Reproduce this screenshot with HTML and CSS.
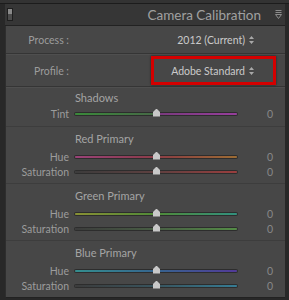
FILE: index.html
```html
<!DOCTYPE html>
<html lang="en">
<head>
  <meta charset="UTF-8">
  <meta name="viewport" content="width=device-width, initial-scale=1.0">
  <title>Camera Calibration</title>
  <link rel="stylesheet" href="styles.css">
</head>
<body>
  <div class="topbar"></div>
  <div class="panel">
    <div class="panel-head">
      <span class="switch"></span>
      <span class="title">Camera Calibration</span>
      <svg class="collapse" width="7" height="9" viewBox="0 0 7 9">
        <path d="M0.5 0.5h6M0.5 2.5h6" stroke="#8c8c8c" stroke-width="1" fill="none"/>
        <path d="M0.5 4.5h6L3.5 8.5z" stroke="#8c8c8c" stroke-width="1" fill="none"/>
      </svg>
    </div>

    <div class="panel-body">
      <div class="field field-process">
        <span class="label">Process :</span>
        <span class="picker">2012 (Current)
          <svg class="updown" width="5" height="8" viewBox="0 0 5 8"><path d="M0 3L2.5 0L5 3zM0 5L2.5 8L5 5z" fill="#a8a8a8"/></svg>
        </span>
      </div>
      <div class="field field-profile">
        <span class="label">Profile :</span>
        <span class="picker picker-marked">Adobe Standard
          <svg class="updown" width="5" height="8" viewBox="0 0 5 8"><path d="M0 3L2.5 0L5 3zM0 5L2.5 8L5 5z" fill="#a8a8a8"/></svg>
        </span>
      </div>

      <div class="group group-shadows">
        <div class="group-title">Shadows</div>
        <div class="slider-row">
          <span class="label">Tint</span>
          <div class="track tint"><span class="thumb"></span></div>
          <span class="value">0</span>
        </div>
      </div>

      <div class="group">
        <div class="group-title">Red Primary</div>
        <div class="slider-row">
          <span class="label">Hue</span>
          <div class="track red-hue"><span class="thumb"></span></div>
          <span class="value">0</span>
        </div>
        <div class="slider-row">
          <span class="label">Saturation</span>
          <div class="track red-sat"><span class="thumb"></span></div>
          <span class="value">0</span>
        </div>
      </div>

      <div class="group">
        <div class="group-title">Green Primary</div>
        <div class="slider-row">
          <span class="label">Hue</span>
          <div class="track green-hue"><span class="thumb"></span></div>
          <span class="value">0</span>
        </div>
        <div class="slider-row">
          <span class="label">Saturation</span>
          <div class="track green-sat"><span class="thumb"></span></div>
          <span class="value">0</span>
        </div>
      </div>

      <div class="group group-last">
        <div class="group-title">Blue Primary</div>
        <div class="slider-row">
          <span class="label">Hue</span>
          <div class="track blue-hue"><span class="thumb"></span></div>
          <span class="value">0</span>
        </div>
        <div class="slider-row">
          <span class="label">Saturation</span>
          <div class="track blue-sat"><span class="thumb"></span></div>
          <span class="value">0</span>
        </div>
      </div>
    </div>
  </div>
</body>
</html>
```

FILE: styles.css
```css
body {
  margin: 0;
  background: #282828;
  font-family: Lato, "Open Sans", sans-serif;
  font-size: 10.5px;
  color: #a0a0a0;
  width: 289px;
  height: 300px;
  overflow: hidden;
}
.topbar {
  height: 3px;
  background: #333;
  border-bottom: 1px solid #1c1c1c;
}
.panel {
  margin-left: 5px;
  width: 280px;
}
.panel-head {
  height: 21px;
  display: flex;
  align-items: center;
  background: #363636;
  border-bottom: 1px solid #222;
}
.switch {
  width: 4px;
  height: 11px;
  margin-left: 2px;
  border: 1px solid #1e1e1e;
  background: linear-gradient(#8a8a8a 0 50%, #4c4c4c 50% 100%);
}
.title {
  flex: 1;
  text-align: right;
  font-size: 13.5px;
  color: #a0a0a0;
  margin-right: 14px;
}
.collapse {
  margin-right: 3px;
}
.panel-body {
  background: #474747;
  border-left: 1px solid #2e2e2e;
  border-bottom: 1px solid #222;
}
.label {
  width: 63px;
  flex: none;
  text-align: right;
  color: #9c9c9c;
}
.field {
  display: flex;
  align-items: center;
  border-bottom: 1px solid #353535;
  box-shadow: 0 1px 0 #4f4f4f;
}
.field-process {
  height: 27px;
}
.field-profile {
  height: 31px;
  margin-top: 1px;
}
.picker {
  margin-left: auto;
  margin-right: 9px;
  width: 100px;
  height: 23px;
  padding-right: 19px;
  border: 3px solid transparent;
  display: flex;
  align-items: center;
  justify-content: flex-end;
  gap: 4px;
  color: #cacaca;
}
.picker-marked {
  border-color: #d40000;
  box-shadow: 0 0 2px rgba(0, 0, 0, 0.6);
}
.group {
  padding: 5px 0 4px;
  border-bottom: 1px solid #3d3d3d;
}
.group-shadows {
  padding: 3px 0 5px;
  margin-top: 1px;
}
.group-shadows .group-title {
  margin-bottom: 1px;
}
.group-last {
  border-bottom: none;
}
.group-title {
  height: 14px;
  line-height: 14px;
  margin: 0 0 3px 69px;
  font-size: 11px;
  color: #a4a4a4;
}
.slider-row {
  height: 15px;
  display: flex;
  align-items: center;
}
.track {
  position: relative;
  width: 162px;
  height: 2px;
  margin-left: 6px;
  border-radius: 1px;
  box-shadow: 0 0 0 1px rgba(24, 24, 24, 0.55);
}
.thumb {
  position: absolute;
  left: 78px;
  top: -4px;
  width: 7px;
  height: 8px;
  background: #c8c8c8;
  clip-path: polygon(50% 0, 100% 45%, 100% 100%, 0 100%, 0 45%);
}
.value {
  width: 36px;
  text-align: right;
  color: #888;
}
.tint {
  background: linear-gradient(90deg, #3a8a3a, #466a46 48%, #7a3a7e 52%, #963e9c);
}
.red-hue {
  background: linear-gradient(90deg, #9a4278, #8e3c52 40%, #8e4440 60%, #9c6c34);
}
.red-sat {
  background: linear-gradient(90deg, #3c3c3c, #5e4040 50%, #9a3e3e);
}
.green-hue {
  background: linear-gradient(90deg, #889034, #508a38 50%, #32907e);
}
.green-sat {
  background: linear-gradient(90deg, #3c3c3c, #485e44 50%, #548c46);
}
.blue-hue {
  background: linear-gradient(90deg, #348e8e, #36648e 50%, #523a98);
}
.blue-sat {
  background: linear-gradient(90deg, #3c3c3c, #38545e 50%, #367c94);
}
```
